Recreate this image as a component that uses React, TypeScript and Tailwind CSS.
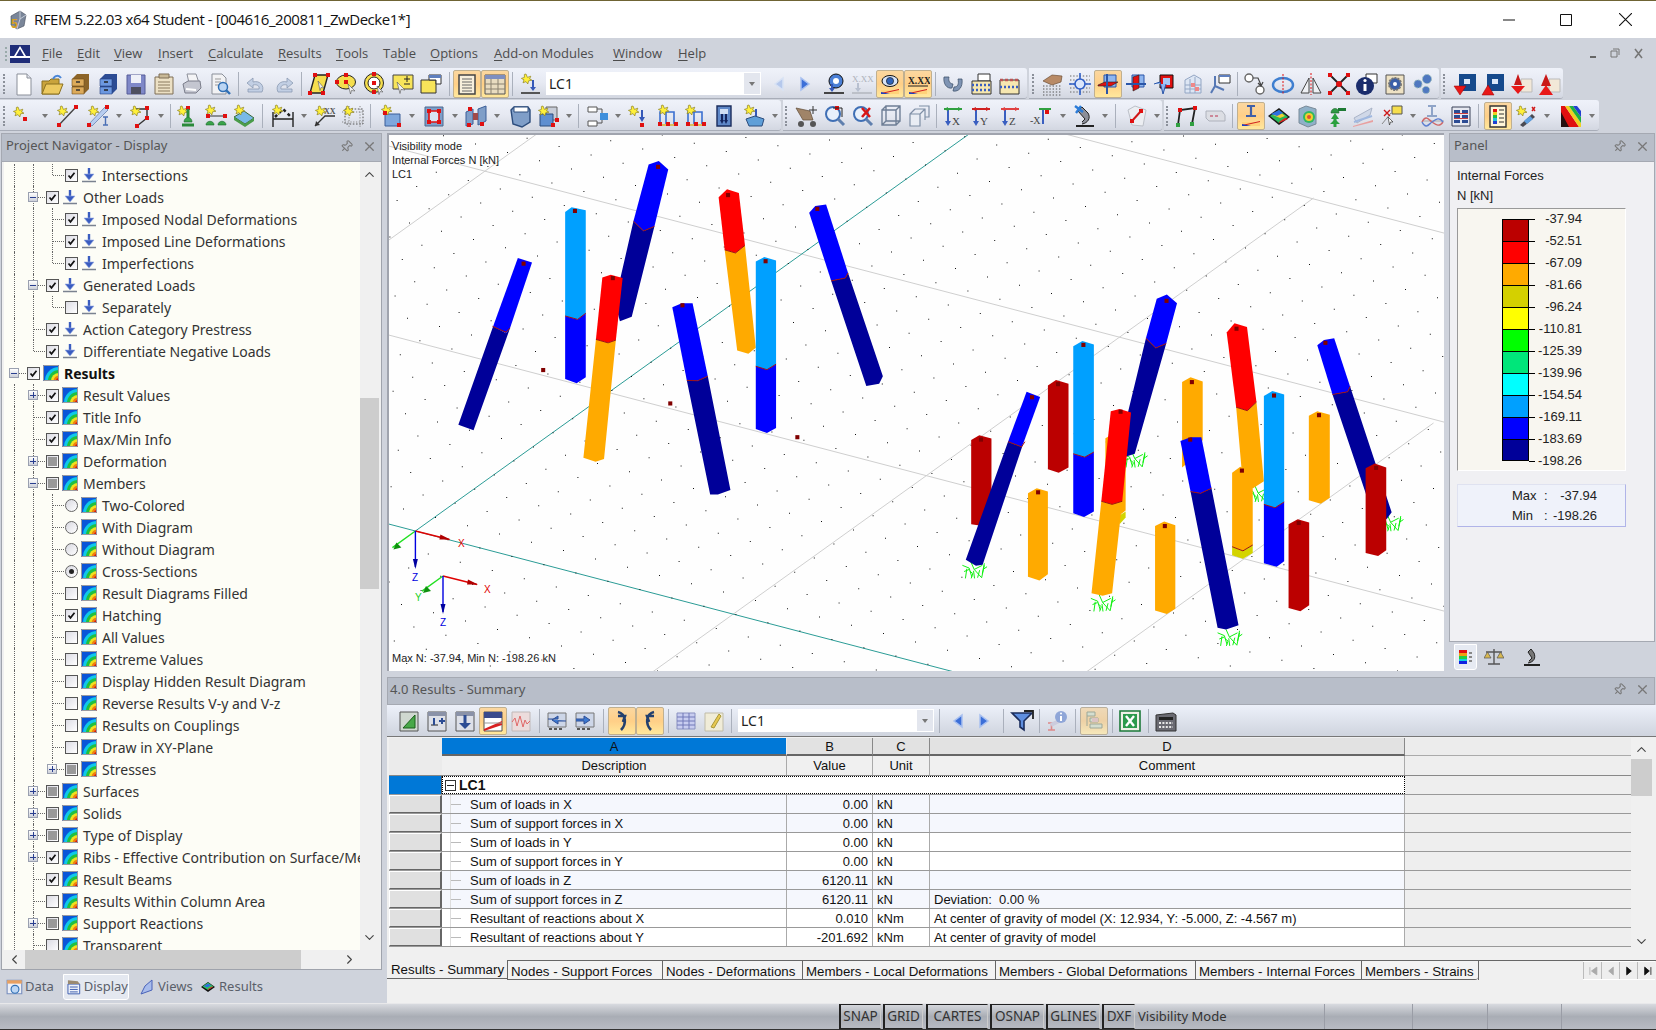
import type { ReactNode } from "react";
import { ChevronDown, ChevronLeft, ChevronRight, ChevronUp, Pin, X } from "lucide-react";

/* ---------- small drawing helpers for the toolbar icons ---------- */
const st = (x: number, y: number) => (
  <path
    d={`M${x} ${y - 5}l1.4 3.4 3.4-1.2-1.2 2.8 2.4 1.2-3.4.6-.8 3.2-1.8-2.4-3 1.2 1-3-2.6-1.4 3-1 0-3z`}
    fill="#fff03a"
    stroke="#8f8420"
    strokeWidth=".7"
  />
);
const n = (x: number, y: number, c = "#e01010") => <rect x={x - 2} y={y - 2} width="4" height="4" fill={c} />;
const grad = (
  <>
    <path d="M3 18h18v4H3z" fill="#ffd27a" />
    <path d="M3 22l18-4v-1L3 21z" fill="#d02020" />
    <path d="M3 22h9l-9-2z" fill="#1f3fc0" />
  </>
);
const mag = (
  <>
    <circle cx="10" cy="10" r="7" fill="#e8f0fb" stroke="#3f6fb5" strokeWidth="2" />
    <path d="M15 15l6 6" stroke="#5f7fae" strokeWidth="3" />
  </>
);
const frame = (
  <>
    <path d="M4 20V8h6v12M10 8h8v12" fill="none" stroke="#3a6fd0" strokeWidth="1.6" />
    <path d="M2 21h20" stroke="#d8c060" strokeWidth="2" />
    {n(4, 20)}
    {n(12, 20)}
    {n(20, 20)}
  </>
);
const axis = (l: string, c: string) => (
  <>
    <path d="M3 5h18" stroke={c} strokeWidth="2" />
    <path d="M7 6v13" stroke="#3a5fc0" strokeWidth="2" />
    <path d="M4 17l3 5 3-5z" fill="#3a5fc0" />
    <path d="M17 3l4 2-4 2zM7 3L3 5l4 2z" fill={c} />
    <text x="11" y="21" fontSize="11" fontFamily="Liberation Serif" fill="#444">
      {l}
    </text>
  </>
);

const icons: Record<string, ReactNode> = {
  new: (
    <>
      <path d="M5 2h10l4 4v17H5z" fill="#fff" stroke="#8a8f99" />
      <path d="M15 2v4h4" fill="#e4e6ee" stroke="#8a8f99" />
    </>
  ),
  open: (
    <>
      <path d="M2 9h7l2-2h8v15H2z" fill="#c9a33c" stroke="#8a7020" />
      <path d="M2 22l4-10h17l-4 10z" fill="#ecc95f" stroke="#8a7020" />
      <path d="M13 7c2-4 6-4 8-1" stroke="#4a86d8" fill="none" strokeWidth="2" />
    </>
  ),
  cabA: (
    <>
      <path d="M4 7l5-5h12v15l-5 5H4z" fill="#8c6428" />
      <path d="M4 7h12v7H4zM4 15h12v7H4z" fill="#dcaa5a" stroke="#6e4e1c" strokeWidth=".6" />
      <path d="M8 10h4M8 18h4" stroke="#333" strokeWidth="1.4" />
    </>
  ),
  cabB: (
    <>
      <path d="M4 7l5-5h12v15l-5 5H4z" fill="#2c4c94" />
      <path d="M4 7h12v7H4zM4 15h12v7H4z" fill="#6c98e0" stroke="#274080" strokeWidth=".6" />
      <path d="M8 10h4M8 18h4" stroke="#222" strokeWidth="1.4" />
    </>
  ),
  save: (
    <>
      <path d="M3 3h18v19H3z" fill="#7f88c8" stroke="#565c98" />
      <path d="M7 3h10v8H7z" fill="#eef0f8" />
      <path d="M7 15h10v7H7z" fill="#4d4f60" />
    </>
  ),
  note: (
    <>
      <path d="M3 5h18v17H3z" fill="#ece0c4" stroke="#7e6f56" />
      <path d="M7 2h10v4H7z" fill="#c8b896" stroke="#7e6f56" />
      <path d="M6 10h12M6 13h12M6 16h12M6 19h12" stroke="#8a7a5e" />
    </>
  ),
  print: (
    <>
      <path d="M7 2h9l3 9H9z" fill="#f4f4f6" stroke="#8c8f9a" />
      <path d="M3 12l5-3h12l1 7-5 5H5z" fill="#c4c6d0" stroke="#7a7d8a" />
      <path d="M6 17l10 1" stroke="#fff" strokeWidth="2" />
    </>
  ),
  prev: (
    <>
      <path d="M4 2h10l4 4v16H4z" fill="#f2f2f4" stroke="#8a8f99" />
      <path d="M7 7h6M7 10h6M7 13h4" stroke="#999" />
      <circle cx="15" cy="15" r="4.5" fill="#bcd6f4" stroke="#2f6fb5" strokeWidth="1.5" />
      <path d="M18 18l4 4" stroke="#2f6fb5" strokeWidth="2.4" />
    </>
  ),
  undo: <path d="M4 20h14c3-6-2-12-9-10V6L3 11l6 5v-3c4-1 7 1 6 4H4z" fill="#c2cfe4" stroke="#8c9ab2" strokeWidth=".8" />,
  redo: <path d="M20 20H6c-3-6 2-12 9-10V6l6 5-6 5v-3c-4-1-7 1-6 4h11z" fill="#c2cfe4" stroke="#8c9ab2" strokeWidth=".8" />,
  para: (
    <>
      <path d="M8 3h13l-5 18H3z" fill="#f5de4e" stroke="#222" strokeWidth="1.4" />
      {n(8, 3)}
      {n(21, 3)}
      {n(3, 21)}
      {n(16, 21)}
      <path d="M11 9l6 7-3-.5-1 3z" fill="#eee" stroke="#555" strokeWidth=".6" />
    </>
  ),
  ellipse: (
    <>
      <ellipse cx="11" cy="10" rx="9.5" ry="7" fill="#f5de4e" stroke="#222" />
      {n(11, 3)}
      {n(11, 10)}
      {n(2, 10)}
      <path d="M13 12l7 7-3.5-.5-1 3.5z" fill="#eee" stroke="#555" strokeWidth=".6" />
    </>
  ),
  ring: (
    <>
      <circle cx="11" cy="11" r="9.5" fill="#f5de4e" stroke="#222" />
      <circle cx="11" cy="11" r="6" fill="#fff" stroke="#222" />
      {n(11, 11)}
      {n(11, 2)}
      {n(11, 20)}
      <path d="M14 14l6 6-3-.4-1 3z" fill="#eee" stroke="#555" strokeWidth=".6" />
    </>
  ),
  plus: (
    <>
      <path d="M2 3h20v14H2z" fill="#f7e45a" stroke="#444" />
      <path d="M13 7h6M16 4v6M13 12h6" stroke="#222" />
      <path d="M6 10l8 8-4-.5-1 4z" fill="#eee" stroke="#555" strokeWidth=".6" />
    </>
  ),
  win: (
    <>
      <path d="M2 8h15v13H2z" fill="#f7e45a" stroke="#333" />
      <path d="M10 3h12v9h-5V8h-7z" fill="#fff" stroke="#333" />
      <path d="M10 3h12v3H10z" fill="#5f7fbe" />
    </>
  ),
  list: (
    <>
      <path d="M4 3h16v19H4z" fill="#f7efdc" stroke="#444" strokeWidth="1.5" />
      <path d="M7 7h10M7 10h10M7 13h10M7 16h10M7 19h10" stroke="#666" />
    </>
  ),
  grid: (
    <>
      <path d="M2 3h20v19H2z" fill="#e9dcc0" stroke="#555" />
      <path d="M2 3h20v4H2z" fill="#7f8fc0" />
      <path d="M2 12h20M2 17h20M8 7v15M15 7v15" stroke="#8b8270" />
    </>
  ),
  lc: (
    <>
      {st(8, 7)}
      <path d="M15 8v9" stroke="#3558b8" strokeWidth="2" />
      <path d="M12 15h6l-3 4z" fill="#3558b8" />
      <path d="M3 21h19" stroke="#555" strokeWidth="2" />
    </>
  ),
  eyeLoad: (
    <>
      <circle cx="14" cy="9" r="7" fill="#4a7fd6" stroke="#111" />
      <circle cx="14" cy="9" r="3" fill="#fff" />
      <path d="M10 12v6" stroke="#3558b8" strokeWidth="2" />
      <path d="M7 16h6l-3 4z" fill="#3558b8" />
      <path d="M2 21h20" stroke="#444" strokeWidth="2" />
    </>
  ),
  xxOff: (
    <>
      <text x="2" y="10" fontSize="9" fontFamily="Liberation Serif" fill="#aeb2ba">
        X.XX
      </text>
      <path d="M8 11v7" stroke="#b8c0d0" strokeWidth="2" />
      <path d="M5 16h6l-3 4z" fill="#b8c0d0" />
      <path d="M2 21h20" stroke="#bcc0c8" strokeWidth="2" />
    </>
  ),
  eye: (
    <>
      <ellipse cx="12" cy="9" rx="8" ry="5.5" fill="#d8e4f8" stroke="#111" />
      <circle cx="12" cy="9" r="3.6" fill="#2f62b8" stroke="#111" strokeWidth=".6" />
      {grad}
    </>
  ),
  xx: (
    <>
      <text x="2" y="12" fontSize="9.5" fontWeight="700" fontFamily="Liberation Serif" fill="#222">
        X.XX
      </text>
      <path d="M2 14h20" stroke="#222" />
      {grad}
    </>
  ),
  link: <path d="M3 5c-1 7 3 12 8 11l1-4c-3 0-5-3-4-7zM21 7c1 8-3 13-9 12l1-4c4 0 5-3 4-8z" fill="#7f94b4" stroke="#43556f" strokeWidth=".8" />,
  abacA: (
    <>
      <path d="M9 2h12v7H9z" fill="#fff" stroke="#333" />
      <path d="M3 9h19v13H3z" fill="#f6e7b0" stroke="#333" />
      <path d="M3 13h19M3 18h19" stroke="#3a5fc0" strokeWidth="2.4" strokeDasharray="2 2" />
    </>
  ),
  abacB: (
    <>
      <path d="M3 8h19v14H3z" fill="#f6e7b0" stroke="#333" />
      <path d="M3 8h19" stroke="#b55" strokeWidth="2.4" strokeDasharray="3 2" />
      <path d="M3 15h19" stroke="#3a5fc0" strokeWidth="2.4" strokeDasharray="2 2" />
    </>
  ),
  hand: (
    <>
      <path d="M3 9l9-6 10 1-1 6-9 3z" fill="#b88a66" stroke="#6e5038" strokeWidth=".7" />
      <path d="M3 14h19M3 17h19M3 20h19M3 23h19" stroke="#555" strokeDasharray="1.4 1.8" />
    </>
  ),
  target: (
    <>
      <path d="M2 4h20M2 8h20M2 12h20M2 16h20M2 20h20" stroke="#666" strokeDasharray="1.4 1.8" />
      <path d="M12 1v22M1 12h22" stroke="#2f5fc8" strokeWidth="1.6" />
      <circle cx="12" cy="12" r="5" fill="#dbe6fb" stroke="#2f5fc8" strokeWidth="1.6" />
    </>
  ),
  cubeA: (
    <>
      <path d="M8 3h12v12H8z" fill="#8fb6ef" stroke="#2a55a8" />
      <path d="M2 13l7-3h13l-7 4H2z" fill="#e01010" stroke="#222" strokeWidth=".6" />
      <path d="M11 2v20" stroke="#2a55a8" strokeWidth="2" />
    </>
  ),
  cubeB: (
    <>
      <path d="M8 3h12v12H8z" fill="#8fb6ef" stroke="#2a55a8" />
      <path d="M9 5v14l6-3V3z" fill="#e01010" stroke="#222" strokeWidth=".6" />
      <path d="M2 12h20" stroke="#2a55a8" strokeWidth="2" />
    </>
  ),
  cubeC: (
    <>
      <path d="M8 3h13v13H8z" fill="#e01010" stroke="#111" />
      <path d="M11 6h7v7h-7z" fill="#a8c8f4" />
      <path d="M2 12l6-2 3 12 3-10" fill="#8fb6ef" stroke="#2a55a8" />
    </>
  ),
  bldg: (
    <>
      <path d="M5 8l9-5 7 4v14H5z" fill="#dde6f4" stroke="#93a6c4" />
      <path d="M5 13h16M5 17h16M10 7v14M15 5v16" stroke="#93a6c4" />
      {n(13, 13, "#e88")}
      {n(17, 17, "#e88")}
    </>
  ),
  branch: (
    <>
      <path d="M11 3h11v8H11z" fill="#fff" stroke="#333" />
      <path d="M11 3h11v2H11z" fill="#5f7fbe" />
      <path d="M7 4v10M7 14l-4 7M7 14l9 4" stroke="#5678b5" strokeWidth="2" fill="none" />
    </>
  ),
  chain: (
    <>
      <circle cx="6" cy="6" r="4" fill="#fff" stroke="#666" strokeWidth="1.4" />
      <circle cx="17" cy="18" r="4" fill="#fff" stroke="#666" strokeWidth="1.4" />
      <path d="M10 6h5l3 7M15 11l3 3 2-4" fill="none" stroke="#444" strokeWidth="1.2" />
    </>
  ),
  orbit: (
    <>
      <ellipse cx="12" cy="13" rx="10" ry="7" fill="none" stroke="#3f7fd0" strokeWidth="2.4" />
      <path d="M12 2v21" stroke="#e01010" strokeDasharray="2 1.5" />
    </>
  ),
  mirror: (
    <>
      <path d="M10 6L2 21h8zM14 6l8 15h-8z" fill="#eef0f4" stroke="#444" />
      <path d="M12 1v22" stroke="#e01010" strokeDasharray="2 1.5" />
    </>
  ),
  cross: (
    <>
      <path d="M3 3l18 18M21 3L3 21" stroke="#222" strokeWidth="1.8" />
      <circle cx="12" cy="12" r="3" fill="#e01010" />
      {n(3, 3)}
      {n(21, 3)}
      {n(3, 21)}
      {n(21, 21)}
    </>
  ),
  info: (
    <>
      <path d="M11 2h11v9H11z" fill="#fff" stroke="#333" />
      <circle cx="10" cy="14" r="9" fill="#1a2c6c" />
      <path d="M10 12v7" stroke="#fff" strokeWidth="3" />
      <circle cx="10" cy="8.5" r="1.6" fill="#fff" />
    </>
  ),
  gearBox: (
    <>
      <path d="M3 3h18v19H3z" fill="#eee2c4" stroke="#555" />
      <circle cx="12" cy="12" r="6" fill="#3a5fa8" stroke="#777" strokeWidth="2" strokeDasharray="2 1" />
      <circle cx="12" cy="12" r="2" fill="#fff" />
    </>
  ),
  gears: (
    <>
      <circle cx="16" cy="7" r="4.5" fill="#4f78c0" stroke="#9bb" strokeDasharray="2 1" />
      <circle cx="7" cy="12" r="4" fill="#4f78c0" stroke="#9bb" strokeDasharray="2 1" />
      <circle cx="15" cy="18" r="3.6" fill="#4f78c0" stroke="#9bb" strokeDasharray="2 1" />
    </>
  ),
  blueDn: (
    <>
      <path d="M6 2h17v17H6z" fill="#164a8c" />
      <path d="M11 7h6v5h-6z" fill="#dce8f8" />
      <path d="M1 14h12l-6 9z" fill="#e81818" stroke="#900" strokeWidth=".5" />
    </>
  ),
  blueUp: (
    <>
      <path d="M6 2h17v17H6z" fill="#164a8c" />
      <path d="M11 7h6v5h-6z" fill="#dce8f8" />
      <path d="M1 23h12L7 13z" fill="#e81818" stroke="#900" strokeWidth=".5" />
    </>
  ),
  redDn: (
    <>
      <path d="M12 7h11v13H12z" fill="#f2e8d8" stroke="#bbb" />
      <path d="M9 2l4 11H5z" fill="#c81818" />
      <path d="M2 14h14l-7 8z" fill="#e81818" />
    </>
  ),
  redUp: (
    <>
      <path d="M12 7h11v13H12z" fill="#f2e8d8" stroke="#bbb" />
      <path d="M9 2l5 12H4z" fill="#c81818" />
      <path d="M2 23h14L9 13z" fill="#e81818" />
    </>
  ),
  sNode: (
    <>
      {st(8, 8)}
      {n(15, 15)}
    </>
  ),
  sLine: (
    <>
      {st(7, 7)}
      <path d="M3 22L21 3" stroke="#444" strokeWidth="1.4" />
      {n(4, 21)}
      {n(21, 3)}
    </>
  ),
  sRib: (
    <>
      <path d="M3 20L19 3l3 3L6 22z" fill="#b8cdf0" stroke="#7f95bb" />
      {st(7, 7)}
      {n(3, 21)}
      {n(21, 3)}
      <path d="M17 13h5M19.500 13v8M17 21h5" stroke="#4a6fb5" strokeWidth="1.4" />
    </>
  ),
  sPoly: (
    <>
      <path d="M6 5h13v9l-10 8" fill="none" stroke="#333" strokeWidth="1.4" />
      {st(7, 7)}
      {n(19, 4)}
      {n(19, 14)}
      {n(9, 22)}
    </>
  ),
  sSup: (
    <>
      {st(7, 7)}
      {n(13, 4)}
      <path d="M9 18c0-6 8-6 8 0z" fill="#3aa34a" stroke="#1a6a2a" strokeWidth=".6" />
      <path d="M13 5v9M7 21h12" stroke="#2a8a3a" strokeWidth="3" />
    </>
  ),
  sSup2: (
    <>
      {st(6, 6)}
      <path d="M4 12h18" stroke="#333" />
      {n(4, 12)}
      {n(21, 12)}
      <path d="M2 21c0-5 8-5 8 0zM14 21c0-5 8-5 8 0z" fill="#3aa34a" stroke="#1a6a2a" strokeWidth=".6" />
    </>
  ),
  sTile: (
    <>
      <path d="M2 13l10-6 10 7-9 6z" fill="#79b9e8" stroke="#386a38" />
      <path d="M2 13v3l11 7 9-6v-3l-9 6z" fill="#4a9c4a" />
      {st(7, 6)}
    </>
  ),
  sDim: (
    <>
      <path d="M2 8v15M22 8v15M2 15h20" stroke="#222" strokeWidth="1.4" />
      <path d="M4 13l8-8 8 8" fill="none" stroke="#222" strokeWidth="2.5" strokeDasharray="3 3" />
      {st(6, 6)}
    </>
  ),
  sXx: (
    <>
      <text x="11" y="10" fontSize="8" fontWeight="700" fontFamily="Liberation Serif" fill="#555">
        XX
      </text>
      <path d="M2 22L12 12h10" fill="none" stroke="#333" strokeWidth="1.3" />
      <path d="M2 22l1-5 4 4z" fill="#333" />
      {st(7, 7)}
    </>
  ),
  sDash: (
    <>
      <path d="M4 5h18v15H4z" fill="none" stroke="#555" strokeDasharray="1.6 1.6" />
      <path d="M8 2v21M19 2v21M1 8h22M1 18h22" stroke="#888" strokeDasharray="1.2 1.6" />
      {st(7, 7)}
    </>
  ),
  sSurf: (
    <>
      <path d="M6 10h15v12H6z" fill="#7fa7dc" stroke="#3c5f98" />
      {st(7, 6)}
      {n(6, 9)}
      {n(20, 21)}
    </>
  ),
  sOpen: (
    <>
      <path d="M3 3h18v19H3z" fill="#7f9ec8" stroke="#4b6890" />
      <path d="M7 7h10v11H7z" fill="#d8e4f4" stroke="#e01010" strokeWidth="1.6" />
      {n(7, 7)}
      {n(17, 7)}
      {n(7, 18)}
      {n(17, 18)}
    </>
  ),
  sPlate: (
    <>
      <path d="M2 8l7-3v15l-7 2zM14 5l8-3v15l-8 4z" fill="#7f9ec8" stroke="#3c5f98" />
      <path d="M9 9h5v7H9z" fill="#a04a4a" />
      {n(5, 21)}
      {n(18, 20)}
      {n(6, 5)}
    </>
  ),
  sBox: (
    <>
      <path d="M3 6l3-3h14l2 3v12l-8 5-9-3z" fill="#7f9ec8" stroke="#2c4c7c" strokeWidth="1.4" />
      <path d="M6 3h14v5H6z" fill="#fff" stroke="#2c4c7c" />
    </>
  ),
  sStack: (
    <>
      <path d="M10 3h11v13H10z" fill="#c8cdd8" stroke="#666" />
      <path d="M4 10h13v12H4z" fill="#5f8fd0" stroke="#2c4c7c" />
      {st(7, 7)}
      {n(17, 21)}
      {n(21, 16)}
    </>
  ),
  sFlow: (
    <>
      <path d="M2 3h9v5H2zM2 17h9v5H2z" fill="#fff" stroke="#555" />
      <path d="M11 5h5v14h-5" fill="none" stroke="#555" />
      <path d="M14 9h8v7h-8z" fill="#3f8fdc" />
    </>
  ),
  sArrow: (
    <>
      {st(7, 7)}
      <path d="M16 6v10" stroke="#3558b8" strokeWidth="2" />
      <path d="M13 13h6l-3 5z" fill="#3558b8" />
      {n(16, 21)}
    </>
  ),
  sFrameA: (
    <>
      {frame}
      {st(7, 6)}
    </>
  ),
  sFrameB: (
    <>
      {frame}
      {st(6, 6)}
    </>
  ),
  sBlue: (
    <>
      <path d="M5 2h14v20H5z" fill="#5f88c8" stroke="#1a2c5c" strokeWidth="1.4" />
      <path d="M8 5h8v5H8z" fill="#d0dff5" />
      <path d="M10 10v8M14 10v8" stroke="#13245c" strokeWidth="2" />
      <path d="M8 16h4l-2 4zM12 16h4l-2 4z" fill="#13245c" />
    </>
  ),
  sDrop: (
    <>
      {st(7, 6)}
      <path d="M14 5v9" stroke="#3558b8" strokeWidth="2" />
      <path d="M4 15l9-3 9 3-2 7H7z" fill="#5f9fd8" stroke="#2c4c7c" />
    </>
  ),
  eagle: (
    <>
      <path d="M1 4l14 3 3 9H8z" fill="#a08468" stroke="#5e4a36" strokeWidth=".7" />
      <circle cx="6" cy="20" r="3" fill="#555" />
      <circle cx="18" cy="20" r="3" fill="#555" />
      <path d="M18 2v8M14 6h8" stroke="#333" />
    </>
  ),
  magPlus: (
    <>
      {mag}
      {n(14, 4)}
      <path d="M10 4h9v9" fill="none" stroke="#222" />
    </>
  ),
  magX: (
    <>
      {mag}
      <path d="M11 4l8 9M19 4l-8 9" stroke="#d81818" strokeWidth="2.6" />
    </>
  ),
  wire: (
    <>
      <path d="M3 6h14v15H3zM7 2h14v15H7zM3 6l4-4M17 6l4-4M3 21l4-4M17 21l4-4" fill="none" stroke="#6f7f96" strokeWidth="1.4" />
    </>
  ),
  wire2: (
    <>
      <path d="M3 10h10v12H3zM8 5h10v11M13 10l5-5M8 5l-5 5" fill="#e9edf4" stroke="#7f8fa6" strokeWidth="1.2" />
      <path d="M12 2h10v11h-4" fill="none" stroke="#7f8fa6" strokeWidth="1.2" />
    </>
  ),
  vX: axis("X", "#30a040"),
  vY: axis("Y", "#d02020"),
  vZ: axis("Z", "#e04040"),
  vMx: (
    <>
      <path d="M10 5h12" stroke="#30a040" strokeWidth="2" />
      <path d="M14 6v14" stroke="#3a5fc0" strokeWidth="2" />
      {n(18, 8)}
      <text x="1" y="20" fontSize="10" fontFamily="Liberation Serif" fill="#444">
        -X
      </text>
    </>
  ),
  micro: (
    <>
      <path d="M4 21h18v2H4z" fill="#222" />
      <path d="M10 20c6-1 9-6 6-11l-6-6-4 4 7 8-3 3" fill="#8c8f99" stroke="#222" />
      <path d="M3 2l8 6M9 2L4 9" stroke="#2c7cd8" strokeWidth="2.4" />
    </>
  ),
  cubeRed: (
    <>
      <path d="M3 6l7-4 11 4-3 16-11-1z" fill="#eceef2" stroke="#bcc0c8" />
      <path d="M7 17l9-10" stroke="#d01818" strokeWidth="2" />
      {n(7, 17)}
      {n(16, 7)}
    </>
  ),
  portal: (
    <>
      <path d="M4 21l2-15 15-2-3 16" fill="none" stroke="#222" strokeWidth="1.8" />
      {n(4, 21, "#30a040")}
      {n(18, 20, "#30a040")}
      {n(6, 6)}
      {n(21, 4)}
    </>
  ),
  pill: (
    <>
      <path d="M3 7h16l3 4v6H6l-3-3z" fill="#dcdee4" stroke="#aeb2bc" />
      <path d="M7 12h10" stroke="#c89" strokeWidth="2" strokeDasharray="3 2" />
    </>
  ),
  beam: (
    <>
      <path d="M8 2h8M12 2v10M7 12h10" stroke="#4060a8" strokeWidth="2.2" />
      {grad}
    </>
  ),
  tile: (
    <>
      <path d="M1 12L12 4l11 9-11 8z" fill="#1a1a1a" />
      <path d="M3 12l9-6 9 7-9 6z" fill="#28b858" />
      <path d="M6 11l6-4 6 5-5 2z" fill="#f0d030" />
      <path d="M4 10l8-4 4 3-6 3z" fill="#2c6fe0" />
      <path d="M12 18l6-4 3 1-9 4z" fill="#e02020" />
    </>
  ),
  cubeMap: (
    <>
      <path d="M4 5l7-3 10 3v15l-8 3-9-4z" fill="#8fb0c8" stroke="#7a8a98" />
      <circle cx="14" cy="13" r="6" fill="#30b860" />
      <circle cx="14" cy="13" r="4" fill="#f0d030" />
      <circle cx="14" cy="13" r="2" fill="#e05030" />
    </>
  ),
  green: (
    <>
      <path d="M8 9c0-6 8-6 8 0z" fill="#2f9a44" stroke="#1c602c" strokeWidth=".6" />
      <path d="M12 23v-9" stroke="#2aa03e" strokeWidth="3" />
      <path d="M8 15h8l-4-6zM7 20h10l-5-5z" fill="#2aa03e" />
      <path d="M15 4h8v3h-8z" fill="#1d7a34" />
    </>
  ),
  blur: (
    <>
      <path d="M3 14L21 4l-2 7-13 8z" fill="#d0d8e8" stroke="#aab4c8" />
      <path d="M2 22l20-6v2L2 23z" fill="#e8a0a0" />
      <path d="M3 18l18-6" stroke="#a0b8e0" strokeWidth="2" />
    </>
  ),
  note2: (
    <>
      <path d="M2 20l9-11" stroke="#888" />
      <path d="M12 2h10v8H12z" fill="#f5de4e" stroke="#555" />
      <path d="M4 6l6 6M10 6l-6 6" stroke="#d01818" strokeWidth="1.4" />
      <path d="M8 13l5 5-2.500 0-1 3z" fill="#fff" stroke="#333" strokeWidth=".7" />
    </>
  ),
  wave: (
    <>
      <path d="M7 2h8M11 2v10M6 12h10" stroke="#8fa4c8" strokeWidth="2" />
      <path d="M1 17h22" stroke="#aaa" />
      <path d="M1 18c4-8 7-2 10 0s7 6 11 0" fill="none" stroke="#d06868" strokeWidth="1.4" />
      <path d="M1 18c4 8 7 2 10 0s7-6 11 0" fill="none" stroke="#5f80d0" strokeWidth="1.4" />
    </>
  ),
  tblA: (
    <>
      <path d="M3 3h18v19H3z" fill="#e6e8f0" stroke="#3a4258" />
      <path d="M5 6h6v3H5zM13 6h6v3h-6zM5 11h6v3H5zM13 11h6v3h-6zM5 16h6v3H5zM13 16h6v3h-6z" fill="#2c4c94" />
      <path d="M5 9.500h14M5 14.500h14" stroke="#c84040" />
    </>
  ),
  legend: (
    <>
      <path d="M4 2h16v21H4z" fill="#fff6d8" stroke="#333" strokeWidth="1.4" />
      <path d="M7 5h4v3H7z" fill="#e01010" />
      <path d="M7 8h4v3H7z" fill="#f0d020" />
      <path d="M7 11h4v3H7z" fill="#20c040" />
      <path d="M7 14h4v3H7z" fill="#20c0e0" />
      <path d="M7 17h4v3H7z" fill="#2040d0" />
      <path d="M13 6h5M13 10h5M13 14h5M13 18h5" stroke="#333" />
    </>
  ),
  wand: (
    <>
      {st(7, 7)}
      <path d="M6 21l12-11 3 3-12 10z" fill="#4a4a52" />
      <path d="M10 17l6-5 3 3-6 5z" fill="#5f9fe0" />
      <path d="M18 3l3 4M21 3l-3 4" stroke="#d01818" strokeWidth="1.4" />
    </>
  ),
  rainbowV: (
    <>
      <path d="M2 2h4l14 21H2z" fill="#e01010" />
      <path d="M6 2h4l12 17v4h-2z" fill="#f0d020" />
      <path d="M10 2h4l8 11v6z" fill="#20b040" />
      <path d="M14 2h4l4 5v6z" fill="#2040d0" />
      <path d="M2 8v15h8" fill="#111" opacity=".9" />
    </>
  ),
  rGreen: (
    <>
      <path d="M3 3h18v19H3z" fill="#cfd8d0" stroke="#555" />
      <path d="M6 19L18 6v13z" fill="#48a848" stroke="#1a601a" />
    </>
  ),
  rAdd: (
    <>
      <path d="M3 3h18v19H3z" fill="#dde0e8" stroke="#555" />
      <path d="M3 3h18v4H3z" fill="#8a92a8" />
      <path d="M6 16h7" stroke="#222" />
      <path d="M9 9v7M14 12h6M17 9v6" stroke="#2c4c94" strokeWidth="2" />
    </>
  ),
  rDown: (
    <>
      <path d="M3 3h18v19H3z" fill="#dde0e8" stroke="#555" />
      <path d="M3 3h18v4H3z" fill="#8a92a8" />
      <path d="M12 6v10" stroke="#2c4c94" strokeWidth="3" />
      <path d="M6 14h12l-6 6z" fill="#2c4c94" />
    </>
  ),
  rTbl: (
    <>
      <path d="M3 3h18v19H3z" fill="#fff" stroke="#555" />
      <path d="M3 3h18v6H3z" fill="#3a4a8c" />
      <path d="M3 20l18-8v4L3 22z" fill="#d82020" />
      <path d="M3 14h18" stroke="#999" />
    </>
  ),
  rWave: (
    <>
      <path d="M3 3h18v19H3z" fill="#ecdcdc" stroke="#c0b8b8" />
      <path d="M3 13l3-4 2 8 3-10 3 11 2-7 2 4 3-3" fill="none" stroke="#e06868" />
    </>
  ),
  rLeft: (
    <>
      <path d="M3 4h18v14H3z" fill="#cdd6e8" stroke="#777" />
      <path d="M3 10h10V7l-6 4 6 4v-3h8" fill="#3c78d0" stroke="#2c4c94" />
      <path d="M4 20h3M9 20h3M14 20h3" stroke="#555" strokeWidth="2" />
    </>
  ),
  rRight: (
    <>
      <path d="M3 4h18v14H3z" fill="#cdd6e8" stroke="#777" />
      <path d="M3 10h8V7l6 4-6 4v-3H3" fill="#3c78d0" stroke="#2c4c94" />
      <path d="M4 20h3M9 20h3M14 20h3" stroke="#555" strokeWidth="2" />
    </>
  ),
  rCurveA: <path d="M8 3c8 2 9 12 3 18M8 7h7l-2 6" fill="none" stroke="#24406e" strokeWidth="2.6" />,
  rCurveB: <path d="M16 3c-8 2-9 12-3 18M16 7H9l2 6" fill="none" stroke="#24406e" strokeWidth="2.6" />,
  rGrid: (
    <>
      <path d="M3 4h18v16H3z" fill="#c8cdf0" stroke="#8890c0" />
      <path d="M3 8h18M3 12h18M3 16h18M9 4v16M15 4v16" stroke="#7078b8" />
    </>
  ),
  rPen: (
    <>
      <path d="M3 4h18v18H3z" fill="#f0ecd8" stroke="#c0bca8" />
      <path d="M9 18l8-13 2 2-7 12z" fill="#e8c850" stroke="#a89838" />
    </>
  ),
  funnel: (
    <>
      <path d="M2 4h20l-8 8v9l-4-3v-6z" fill="#5f8fe0" stroke="#1a2c5c" strokeWidth="1.6" />
      <path d="M14 2h9v8" fill="none" stroke="#222" strokeWidth="1.8" />
    </>
  ),
  iBeamInfo: (
    <>
      <path d="M3 14h7M6.500 14v7M3 21h7" stroke="#d88" strokeWidth="1.6" />
      <path d="M6 16l12-6" stroke="#ccd" strokeWidth="4" />
      <circle cx="16" cy="8" r="6" fill="#8fa6d8" />
      <path d="M16 7v5" stroke="#fff" strokeWidth="2" />
      <circle cx="16" cy="4.500" r="1" fill="#fff" />
    </>
  ),
  tree: (
    <>
      <path d="M5 3h8v4H5zM8 9h8v4H8zM8 15h12v4H8z" fill="#cfe0c8" stroke="#99aa90" />
      <path d="M5 7v10" stroke="#99aa90" />
      <path d="M10 9h6v4h-6z" fill="#e8c0c0" />
    </>
  ),
  excel: (
    <>
      <path d="M2 2h20v20H2z" fill="#f0f0e8" stroke="#1d7a3a" strokeWidth="1.6" />
      <path d="M5 5h14v14H5z" fill="#2c9a4c" />
      <path d="M8 7l8 10M16 7L8 17" stroke="#fff" strokeWidth="2.4" />
    </>
  ),
  calc: (
    <>
      <path d="M2 6l17-2 3 2v16H2z" fill="#6a6a72" stroke="#333" />
      <path d="M5 8h14v3H5z" fill="#222" />
      <path d="M5 14h14M5 18h14" stroke="#e8e8e8" strokeWidth="2" strokeDasharray="2 1.4" />
    </>
  ),
};

function Ico({ k, size = 24 }: { k: string; size?: number }) {
  return (
    <svg viewBox="0 0 24 24" width={size} height={size} className="shrink-0">
      {icons[k]}
    </svg>
  );
}

function Btn({ k, active, className = "" }: { k: string; active?: boolean; className?: string }) {
  return (
    <div
      className={`w-[28px] h-[28px] shrink-0 flex items-center justify-center rounded-[2px] border ${
        active ? "bg-gradient-to-b from-[#fbd7a0] via-[#ffcf87] to-[#ffe89c] border-[#c0b090]" : "border-transparent"
      } ${className}`}
    >
      <Ico k={k} />
    </div>
  );
}

const Dd = ({ className = "w-[14px]" }: { className?: string }) => (
  <div className={`h-[28px] shrink-0 flex items-center justify-center ${className}`}>
    <div className="w-0 h-0 border-x-[3.5px] border-x-transparent border-t-[4px] border-t-[#777]" />
  </div>
);
const Sep = ({ className = "w-[8px]" }: { className?: string }) => (
  <div className={`h-[24px] shrink-0 flex justify-center ${className}`}>
    <div className="w-px h-full bg-[#aab0bc]" />
  </div>
);
const Grip = ({ className = "" }: { className?: string }) => (
  <div className={`w-[5px] h-[20px] shrink-0 border-l-2 border-dotted border-[#8b909a] ${className}`} />
);

function Seg({ className, children }: { className: string; children: ReactNode }) {
  return (
    <div
      className={`h-[31px] flex items-center shrink-0 rounded-r-[3px] border-b border-[#a8adb8] bg-gradient-to-b from-[#eff2fa] via-[#e6e9f2] to-[#d3d7e1] ${className}`}
    >
      {children}
    </div>
  );
}

function Combo({ className }: { className: string }) {
  return (
    <div className={`h-[23px] shrink-0 bg-white flex items-center text-[14px] text-[#222] ${className}`}>
      <span className="flex-1 pl-[3px] font-['Noto_Sans']">LC1</span>
      <div className="w-[18px] h-full bg-[#e3e6ee] border border-white flex items-center justify-center">
        <div className="w-0 h-0 border-x-[3.5px] border-x-transparent border-t-[4px] border-t-[#777]" />
      </div>
    </div>
  );
}

const Tri = ({ dir, pale, className = "" }: { dir: "l" | "r"; pale?: boolean; className?: string }) => (
  <div className={`w-[26px] h-[28px] shrink-0 flex items-center justify-center ${className}`}>
    <svg viewBox="0 0 12 16" width="12" height="16">
      <path
        d={dir === "l" ? "M10 2v12L2 8z" : "M2 2v12l8-6z"}
        fill={pale ? "#b5c8ec" : "#3c6fd8"}
        stroke={pale ? "#d8e2f4" : "#a8c0f0"}
        strokeWidth="1.5"
      />
    </svg>
  </div>
);

/* ---------- menu ---------- */
const menu: [string, string, string, string][] = [
  ["", "F", "ile", "w-[35px]"],
  ["", "E", "dit", "w-[37px]"],
  ["", "V", "iew", "w-[44px]"],
  ["", "I", "nsert", "w-[50px]"],
  ["", "C", "alculate", "w-[70px]"],
  ["", "R", "esults", "w-[58px]"],
  ["", "T", "ools", "w-[47px]"],
  ["Ta", "b", "le", "w-[47px]"],
  ["", "O", "ptions", "w-[64px]"],
  ["", "A", "dd-on Modules", "w-[119px]"],
  ["", "W", "indow", "w-[65px]"],
  ["", "H", "elp", "w-[40px]"],
];

function TitleBar() {
  return (
    <div className="h-[38px] bg-white border-t border-[#6f6434] flex items-center shrink-0">
      <svg viewBox="0 0 20 20" width="20" height="20" className="ml-[8px]">
        <path d="M3 6l9-5 6 4-2 11-7 3-6-4z" fill="#7a8699" stroke="#444c5a" strokeWidth=".6" />
        <path d="M12 1v8l6-4M12 9l-3 10" stroke="#c5ccd8" fill="none" />
        <text x="3" y="18" fontSize="12" fontWeight="700" fontFamily="Liberation Sans" fill="#d8a020">
          5
        </text>
      </svg>
      <span className="ml-[6px] text-[15px] text-[#111] font-['Open_Sans'] tracking-[-0.45px]">
        RFEM 5.22.03 x64 Student - [004616_200811_ZwDecke1*]
      </span>
      <div className="flex-1" />
      <svg viewBox="0 0 12 12" width="12" height="12" className="mr-[45px]">
        <path d="M0 6h12" stroke="#111" />
      </svg>
      <svg viewBox="0 0 12 12" width="12" height="12" className="mr-[47px]">
        <path d="M.5 .5h11v11H.5z" fill="none" stroke="#111" />
      </svg>
      <svg viewBox="0 0 12 12" width="13" height="13" className="mr-[24px]">
        <path d="M0 0l12 12M12 0L0 12" stroke="#111" />
      </svg>
    </div>
  );
}

function MenuBar() {
  return (
    <div className="h-[30px] pt-px bg-[#cfd3dc] flex items-center shrink-0 text-[13px] text-[#4c4c4c] font-['Open_Sans']">
      <div className="ml-[5px] w-[3px] h-[14px] border-l-2 border-dotted border-[#9aa]" />
      <svg viewBox="0 0 20 18" width="20" height="18" className="ml-[2px] mr-[12px]">
        <path d="M0 0h20v18H0z" fill="#1f2d78" />
        <path d="M0 11h20v2H0zM10 1L4 11h2l4-7 4 7h2z" fill="#fff" />
      </svg>
      {menu.map(([a, b, c, w]) => (
        <span key={b + c} className={`shrink-0 ${w}`}>
          {a}
          <u className="underline-offset-2">{b}</u>
          {c}
        </span>
      ))}
      <div className="flex-1" />
      <svg viewBox="0 0 60 12" width="60" height="12" className="mr-[6px]">
        <path d="M0 9h6" stroke="#666" strokeWidth="2" />
        <path d="M21 3h6v6h-6zM23 1h6v6" fill="none" stroke="#777" />
        <path d="M45 1l7 9M52 1l-7 9" stroke="#777" strokeWidth="1.6" />
      </svg>
    </div>
  );
}

function ToolRowOne() {
  return (
    <div className="h-[32px] flex shrink-0 bg-[#cfd3dc]">
      <Seg className="w-[1027px] pl-[3px] pt-px">
        <Grip className="mr-[2px]" />
        <Btn k="new" />
        <Btn k="open" />
        <Btn k="cabA" />
        <Btn k="cabB" />
        <Btn k="save" />
        <Btn k="note" />
        <Btn k="print" />
        <Btn k="prev" />
        <Sep />
        <Btn k="undo" />
        <Btn k="redo" />
        <Sep className="w-[7px]" />
        <Btn k="para" />
        <Btn k="ellipse" />
        <Btn k="ring" />
        <Btn k="plus" />
        <Btn k="win" />
        <Sep />
        <Btn k="list" active />
        <Btn k="grid" active />
        <Sep className="w-[7px]" />
        <Btn k="lc" />
        <Combo className="w-[215px] ml-[2px]" />
        <Tri dir="l" pale className="ml-[5px]" />
        <Tri dir="r" />
        <Btn k="eyeLoad" className="ml-[2px]" />
        <Btn k="xxOff" />
        <Btn k="eye" active />
        <Btn k="xx" active />
        <Sep className="w-[7px]" />
        <Btn k="link" />
        <Btn k="abacA" />
        <Btn k="abacB" />
      </Seg>
      <Seg className="w-[410px] ml-[2px] pl-[2px] pt-px">
        <Grip className="mr-[1px] ml-[1px]" />
        <Btn k="hand" />
        <Btn k="target" />
        <Btn k="cubeA" active />
        <Btn k="cubeB" />
        <Btn k="cubeC" />
        <Btn k="bldg" />
        <Btn k="branch" />
        <Sep className="w-[7px]" />
        <Btn k="chain" />
        <Btn k="orbit" />
        <Btn k="mirror" />
        <Btn k="cross" />
        <Btn k="info" />
        <Btn k="gearBox" />
        <Btn k="gears" />
      </Seg>
      <Seg className="w-[122px] ml-[2px] pl-[2px] pt-px">
        <Grip className="mr-[3px]" />
        <Btn k="blueDn" />
        <Btn k="blueUp" />
        <Btn k="redDn" />
        <Btn k="redUp" />
      </Seg>
    </div>
  );
}

function ToolRowTwo() {
  return (
    <div className="h-[32px] flex shrink-0 bg-[#cfd3dc]">
      <Seg className="w-[781px] pl-[3px] pt-[2px]">
        <Grip />
        <Btn k="sNode" />
        <Dd className="w-[17px]" />
        <Btn k="sLine" />
        <Btn k="sRib" className="ml-[3px]" />
        <Dd />
        <Btn k="sPoly" />
        <Dd className="w-[13px]" />
        <Sep className="w-[6px]" />
        <Btn k="sSup" />
        <Btn k="sSup2" className="ml-px" />
        <Btn k="sTile" />
        <Sep />
        <Btn k="sDim" className="ml-[3px]" />
        <Dd />
        <Btn k="sXx" />
        <Btn k="sDash" />
        <Sep className="w-[6px]" />
        <Btn k="sSurf" className="ml-[4px]" />
        <Dd />
        <Btn k="sOpen" className="ml-px" />
        <Dd />
        <Btn k="sPlate" />
        <Dd />
        <Btn k="sBox" className="ml-[2px]" />
        <Btn k="sStack" />
        <Dd />
        <Sep className="w-[5px]" />
        <Btn k="sFlow" className="ml-[3px]" />
        <Dd className="w-[12px]" />
        <Btn k="sArrow" />
        <Btn k="sFrameA" className="ml-[2px]" />
        <Btn k="sFrameB" />
        <Btn k="sBlue" />
        <Btn k="sDrop" className="ml-[2px]" />
        <Dd />
      </Seg>
      <Seg className="w-[379px] ml-[2px] pl-[2px] pt-[2px]">
        <Grip className="mr-[3px]" />
        <Btn k="eagle" />
        <Btn k="magPlus" />
        <Btn k="magX" />
        <Btn k="wire" />
        <Btn k="wire2" />
        <Sep className="w-[6px]" />
        <Btn k="vX" />
        <Btn k="vY" />
        <Btn k="vZ" className="ml-px" />
        <Btn k="vMx" className="ml-[3px]" />
        <Dd className="w-[15px]" />
        <Btn k="micro" />
        <Dd />
        <Sep className="w-[6px]" />
        <Btn k="cubeRed" className="ml-[5px]" />
        <Dd className="w-[12px]" />
      </Seg>
      <Seg className="w-[435px] ml-[2px] pl-[2px] pt-[2px]">
        <Grip className="mr-px" />
        <Btn k="portal" />
        <Btn k="pill" className="ml-px" />
        <Sep className="w-[6px]" />
        <Btn k="beam" active className="ml-[2px]" />
        <Btn k="tile" />
        <Btn k="cubeMap" />
        <Btn k="green" />
        <Btn k="blur" />
        <Btn k="note2" className="ml-px" />
        <Dd />
        <Btn k="wave" className="ml-[-1px]" />
        <Btn k="tblA" />
        <Sep className="w-[6px]" />
        <Btn k="legend" active className="ml-[3px]" />
        <Btn k="wand" />
        <Dd />
        <Btn k="rainbowV" className="ml-[3px]" />
        <Dd />
      </Seg>
    </div>
  );
}

/* ---------- navigator tree ---------- */
type Mark = "c" | "e" | "p" | "r" | "s";
type Row = { t: string; l: number; m: Mark; x?: "+" | "-"; load?: boolean; b?: boolean };

const rows: Row[] = [
  { t: "Intersections", l: 2, m: "c", load: true },
  { t: "Other Loads", l: 1, m: "c", x: "-", load: true },
  { t: "Imposed Nodal Deformations", l: 2, m: "c", load: true },
  { t: "Imposed Line Deformations", l: 2, m: "c", load: true },
  { t: "Imperfections", l: 2, m: "c", load: true },
  { t: "Generated Loads", l: 1, m: "c", x: "-", load: true },
  { t: "Separately", l: 2, m: "e", load: true },
  { t: "Action Category Prestress", l: 1, m: "c", load: true },
  { t: "Differentiate Negative Loads", l: 1, m: "c", load: true },
  { t: "Results", l: 0, m: "c", x: "-", b: true },
  { t: "Result Values", l: 1, m: "c", x: "+" },
  { t: "Title Info", l: 1, m: "c" },
  { t: "Max/Min Info", l: 1, m: "c" },
  { t: "Deformation", l: 1, m: "p", x: "+" },
  { t: "Members", l: 1, m: "p", x: "-" },
  { t: "Two-Colored", l: 2, m: "r" },
  { t: "With Diagram", l: 2, m: "r" },
  { t: "Without Diagram", l: 2, m: "r" },
  { t: "Cross-Sections", l: 2, m: "s" },
  { t: "Result Diagrams Filled", l: 2, m: "e" },
  { t: "Hatching", l: 2, m: "c" },
  { t: "All Values", l: 2, m: "e" },
  { t: "Extreme Values", l: 2, m: "e" },
  { t: "Display Hidden Result Diagram", l: 2, m: "e" },
  { t: "Reverse Results V-y and V-z", l: 2, m: "e" },
  { t: "Results on Couplings", l: 2, m: "e" },
  { t: "Draw in XY-Plane", l: 2, m: "e" },
  { t: "Stresses", l: 2, m: "p", x: "+" },
  { t: "Surfaces", l: 1, m: "p", x: "+" },
  { t: "Solids", l: 1, m: "p", x: "+" },
  { t: "Type of Display", l: 1, m: "p", x: "+" },
  { t: "Ribs - Effective Contribution on Surface/Member", l: 1, m: "c", x: "+" },
  { t: "Result Beams", l: 1, m: "c" },
  { t: "Results Within Column Area", l: 1, m: "e" },
  { t: "Support Reactions", l: 1, m: "p", x: "+" },
  { t: "Transparent", l: 1, m: "e" },
];

const indent = ["pl-[23px]", "pl-[42px]", "pl-[61px]"];
const guideX = ["left-[10px]", "left-[29px]", "left-[48px]"];
const tickX = ["left-[11px]", "left-[30px]", "left-[49px]"];
const expX = ["left-[5px]", "left-[24px]", "left-[43px]"];

function continues(i: number, level: number) {
  for (let j = i + 1; j < rows.length; j++) {
    if (rows[j].l < level) return false;
    if (rows[j].l === level) return true;
  }
  return true;
}

function Mk({ m }: { m: Mark }) {
  if (m === "r" || m === "s")
    return (
      <div className="w-[13px] h-[13px] rounded-full border border-[#666] bg-gradient-to-br from-[#d8d8e0] to-white flex items-center justify-center shrink-0">
        {m === "s" && <div className="w-[5px] h-[5px] rounded-full bg-[#222]" />}
      </div>
    );
  return (
    <div className="w-[13px] h-[13px] border border-[#555] bg-gradient-to-br from-[#dcdce4] to-white flex items-center justify-center shrink-0">
      {m === "c" && (
        <svg viewBox="0 0 11 11" width="11" height="11">
          <path d="M2.500 5.500l2 2.300 4-5" fill="none" stroke="#111" strokeWidth="1.700" />
        </svg>
      )}
      {m === "p" && <div className="w-[9px] h-[9px] bg-[#999]" />}
    </div>
  );
}

const LoadIco = () => (
  <svg viewBox="0 0 16 16" width="16" height="16" className="shrink-0">
    <path d="M8 1v8" stroke="#3a5cc0" strokeWidth="2.400" />
    <path d="M3 7h10l-5 6z" fill="#3a5cc0" stroke="#9db0e4" strokeWidth=".6" />
    <path d="M1 14.500h14" stroke="#7a8290" strokeWidth="1.500" />
  </svg>
);
const RainbowIco = () => (
  <svg viewBox="0 0 16 16" width="16" height="16" className="shrink-0">
    <path d="M0 0h16v16H0z" fill="#0a55d8" />
    <circle cx="16" cy="16" r="14" fill="#10c8e8" />
    <circle cx="16" cy="16" r="11" fill="#20c040" />
    <circle cx="16" cy="16" r="8" fill="#f0e020" />
    <circle cx="16" cy="16" r="5.500" fill="#f08010" />
    <circle cx="16" cy="16" r="3" fill="#d81010" />
    <path d="M.5 .5h15v15H.5z" fill="none" stroke="#9a9aa0" />
  </svg>
);

function Navigator() {
  return (
    <div className="w-[382px] shrink-0 flex flex-col">
      <div className="ml-[1px] h-[29px] mt-px pb-[3px] bg-[#b8bec9] flex items-center pl-[4px] text-[13px] text-[#555] font-['Noto_Sans'] border border-[#a5a9b2]">
        <span className="flex-1">Project Navigator - Display</span>
        <Pin size={13} className="text-[#777] mr-[9px] rotate-45" />
        <X size={15} className="text-[#777] mr-[4px]" />
      </div>
      <div className="ml-[1px] flex-1 min-h-0 flex border-x border-[#9fa3ac] bg-[#f0f0f0]">
        <div className="w-[2px] shrink-0" />
        <div className="w-[356px] shrink-0 bg-[#fdfdf6] overflow-hidden pt-[2px] font-['Noto_Sans'] text-[14px] text-[#333]">
          {rows.map((r, i) => (
            <div key={r.t} className={`relative h-[22px] flex items-center whitespace-nowrap ${indent[r.l]}`}>
              {r.l >= 1 && continues(i, 0) && <div className={`absolute top-0 bottom-0 border-l border-dotted border-[#666] ${guideX[0]}`} />}
              {r.l === 2 && continues(i, 1) && <div className={`absolute top-0 bottom-0 border-l border-dotted border-[#666] ${guideX[1]}`} />}
              {r.l > 0 && (
                <div
                  className={`absolute top-0 border-l border-dotted border-[#666] ${guideX[r.l]} ${
                    continues(i, r.l) ? "bottom-0" : "h-[11px]"
                  }`}
                />
              )}
              <div className={`absolute top-[11px] w-[11px] border-t border-dotted border-[#666] ${tickX[r.l]}`} />
              {r.x && (
                <div
                  className={`absolute top-[6px] w-[10px] h-[10px] bg-gradient-to-b from-white to-[#cdd0da] border border-[#9aa0b0] flex items-center justify-center ${expX[r.l]}`}
                >
                  <div className="w-[6px] h-px bg-[#2a3f8f]" />
                  {r.x === "+" && <div className="absolute w-px h-[6px] bg-[#2a3f8f]" />}
                </div>
              )}
              <div className="relative flex items-center">
                <Mk m={r.m} />
                <div className="w-[3px]" />
                {r.load ? <LoadIco /> : <RainbowIco />}
                <span className={`ml-[5px] ${r.b ? "font-bold text-[#111]" : ""}`}>{r.t}</span>
              </div>
            </div>
          ))}
        </div>
        <div className="w-[19px] shrink-0 bg-[#f0f0f0] flex flex-col items-center pt-[5px] pb-[5px] text-[#444]">
          <ChevronUp size={15} strokeWidth={1.8} />
          <div className="mt-[216px] h-[191px] w-full bg-[#cdcdcd]" />
          <div className="flex-1" />
          <ChevronDown size={15} strokeWidth={1.8} />
        </div>
        <div className="w-[3px] shrink-0" />
      </div>
      <div className="ml-[1px] h-[20px] flex items-center bg-[#f0f0f0] border-x border-b border-[#9fa3ac] text-[#444] shrink-0">
        <ChevronLeft size={15} strokeWidth={1.8} className="ml-[5px]" />
        <div className="ml-[3px] w-[276px] h-full bg-[#cdcdcd]" />
        <div className="flex-1" />
        <ChevronRight size={15} strokeWidth={1.8} className="mr-[24px]" />
      </div>
      <div className="h-[33px] flex items-center bg-[#cfd3dc] text-[13px] text-[#5a5f6a] font-['Noto_Sans'] shrink-0">
        <div className="w-[63px] pl-[6px] flex items-center gap-[1px]">
          <svg viewBox="0 0 16 16" width="18" height="18">
            <path d="M1 2h13v12H1z" fill="#eef0f6" stroke="#7a90c0" />
            <path d="M1 2h13v3H1z" fill="#e8a060" />
            <circle cx="8" cy="10" r="3.500" fill="#bcd6f4" stroke="#2f6fb5" />
          </svg>
          <span>Data</span>
        </div>
        <div className="w-[66px] h-[26px] bg-[#e4e8f0] border border-white rounded-b-[3px] flex items-center pl-[2px] gap-[2px]">
          <svg viewBox="0 0 16 16" width="16" height="16">
            <path d="M2 5h12v10H2z" fill="#eef2fa" stroke="#3f5fb0" />
            <path d="M2 1l10 1 2 3H2z" fill="#9a8a72" />
            <path d="M4 8h8M4 10.500h8M4 13h8" stroke="#3f5fb0" />
          </svg>
          <span>Display</span>
        </div>
        <div className="w-[71px] pl-[11px] flex items-center gap-[2px]">
          <svg viewBox="0 0 16 16" width="16" height="16">
            <path d="M1 15l11-4V1L5 7z" fill="#a8bcec" stroke="#4a62b8" />
          </svg>
          <span>Views</span>
        </div>
        <div className="flex items-center gap-[3px]">
          <svg viewBox="0 0 16 16" width="16" height="16">
            <path d="M1 8l7-5 7 5-7 5z" fill="#111" />
            <path d="M2.500 7.500l5.500-4 5.500 4-5.500 3.500z" fill="#30c060" />
            <path d="M4 7l4-2.500 3 2-4 2z" fill="#2c6fe0" />
            <path d="M8 10l4-2.500 1 .5-5 3z" fill="#e02020" />
          </svg>
          <span>Results</span>
        </div>
      </div>
    </div>
  );
}

/* ---------- 3D viewport ---------- */
type Poly = [string, string];
const BLUE = "#0000ff";
const NAVY = "#000099";
const SKY = "#00a0ff";
const RED = "#ff0000";
const ORG = "#ffaa00";
const DRK = "#bb0000";
const YEL = "#d4d400";

// polygons below are in the coordinates of the two halves of the view
const left: Poly[] = [
  [BLUE, "393,372 435,385 370,575 358,590 320,570"],
  [NAVY, "320,570 358,590 370,575 262,872 217,856"],
  [SKY, "533,238 552,224 594,233 594,532 570,550 533,540"],
  [BLUE, "533,540 570,550 594,532 594,718 567,735 533,723"],
  [BLUE, "780,100 810,90 838,115 797,280 765,293 735,265"],
  [NAVY, "735,265 765,293 797,280 730,542 695,555 680,500"],
  [RED, "643,428 668,420 703,430 683,610 660,618 624,608"],
  [ORG, "624,608 660,618 683,610 648,955 623,963 587,952"],
  [BLUE, "850,515 878,503 910,503 955,715 925,728 893,727"],
  [NAVY, "893,727 925,728 955,715 1022,1045 985,1058 962,1058"],
  [RED, "987,195 1012,172 1047,183 1065,335 1037,357 1005,348"],
  [ORG, "1005,348 1037,357 1065,335 1097,632 1075,650 1042,640"],
  [SKY, "1097,382 1122,369 1157,379 1157,680 1130,696 1097,686"],
  [BLUE, "1097,686 1130,696 1157,680 1157,865 1130,880 1097,868"],
  [BLUE, "1255,240 1273,221 1305,216 1370,415 1362,430 1320,438"],
  [NAVY, "1320,438 1362,430 1370,415 1473,715 1462,737 1424,743"],
];
const leftSeams = [
  "318,570 358,587 370,575",
  "533,540 570,550 594,532",
  "735,265 765,293 797,280",
  "624,608 660,618 683,610",
  "893,727 925,728 955,715",
  "1005,348 1037,357 1065,335",
  "1097,686 1130,696 1157,680",
  "1320,438 1362,430 1370,415",
];
const leftNodes = [
  [410, 388], [562, 235], [808, 107], [674, 430], [880, 509], [1015, 189], [1126, 381], [1279, 229], [468, 697], [844, 794], [1220, 892],
];

const right: Poly[] = [
  [DRK, "181,900 205,886 241,896 241,1130 215,1150 181,1145"],
  [DRK, "408,742 432,726 469,737 469,980 440,995 408,985"],
  [BLUE, "730,490 760,478 790,503 758,620 727,633 698,605"],
  [NAVY, "698,605 727,633 758,620 665,940 640,948 625,900"],
  [ORG, "805,732 830,718 866,730 866,900 830,960 805,980"],
  [ORG, "578,895 605,880 638,900 638,1105 618,1120 578,1090"],
  [YEL, "618,1120 638,1108 638,1125 620,1145"],
  [BLUE, "345,760 385,775 335,910 330,920 290,905"],
  [NAVY, "290,905 330,920 335,910 215,1262 195,1265 165,1248"],
  [ORG, "349,1055 375,1040 408,1050 408,1290 383,1308 349,1297"],
  [SKY, "483,628 510,613 544,623 544,935 517,950 483,940"],
  [BLUE, "483,940 517,950 544,935 544,1108 515,1124 483,1113"],
  [RED, "937,588 960,561 997,572 1025,790 998,815 965,805"],
  [ORG, "965,805 998,815 1025,790 1047,1020 1015,1040 985,1030"],
  [BLUE, "1205,625 1225,610 1255,605 1302,745 1295,760 1250,768"],
  [NAVY, "1250,768 1295,760 1302,745 1425,1110 1410,1130 1350,1060"],
  [DRK, "1348,982 1375,968 1409,980 1409,1220 1385,1237 1348,1228"],
  [SKY, "1047,772 1072,758 1107,768 1107,1080 1080,1097 1047,1087"],
  [BLUE, "1047,1087 1080,1097 1107,1080 1107,1252 1085,1268 1047,1258"],
  [ORG, "953,995 977,978 1014,990 1014,1205 985,1222 953,1210"],
  [YEL, "953,1210 985,1222 1014,1205 1014,1228 985,1245 953,1235"],
  [RED, "594,817 620,810 654,820 628,1078 598,1087 566,1078"],
  [ORG, "566,1078 598,1087 628,1078 598,1345 570,1352 537,1345"],
  [ORG, "725,1150 752,1137 785,1148 785,1390 760,1405 725,1395"],
  [BLUE, "800,903 830,892 862,892 892,1040 860,1055 830,1050"],
  [NAVY, "830,1050 860,1055 892,1040 972,1438 935,1450 910,1445"],
  [ORG, "1180,830 1205,817 1242,827 1242,1068 1215,1085 1180,1075"],
  [DRK, "1120,1145 1147,1130 1181,1140 1181,1380 1155,1397 1120,1388"],
];
const rightSeams = [
  "290,905 330,920 340,905",
  "483,940 517,950 544,935",
  "698,605 727,633 758,620",
  "965,805 998,815 1025,790",
  "1250,768 1295,760 1302,745",
  "1047,1087 1080,1097 1107,1080",
  "953,1210 985,1222 1014,1205",
  "566,1078 598,1087 628,1078",
  "830,1050 860,1055 892,1040",
];
const rightNodes = [
  [210, 899], [361, 776], [438, 738], [379, 1052], [513, 624], [759, 496], [623, 818], [754, 1150], [834, 732], [829, 899], [966, 577], [982, 989], [1077, 771], [1210, 828], [1229, 618], [1379, 981], [1150, 1141],
];
const springs = [
  [190, 1272],
  [570, 1368],
  [665, 950],
  [945, 1468],
  [1030, 1050],
  [1422, 1135],
];

const O = { x: 415.4, y: 531 };
function dotPath() {
  let d = "";
  for (let i = -40; i < 60; i++) {
    for (let j = -30; j < 60; j++) {
      const x = O.x + i * 32 + j * 19.6;
      const y = O.y + i * 8.3 - j * 14.1;
      if (x > 388 && x < 1445 && y > 134 && y < 672) d += `M${x.toFixed(1)} ${y.toFixed(1)}h1v1h-1z`;
    }
  }
  return d;
}

const lineAlongX = (off: number) => `M388 ${O.y - off + (388 - O.x) * 0.2616}L1445 ${O.y - off + (1445 - O.x) * 0.2616}`;
const lineAlongY = (off: number, top = 133, bot = 673) =>
  `M${O.x + (O.y + off - top) / 0.717} ${top}L${O.x + (O.y + off - bot) / 0.717} ${bot}`;

function Axes({ x, y, w, g }: { x: number; y: number; w: number; g: number }) {
  return (
    <g>
      <path d={`M${x} ${y}l${w} ${w * 0.25}`} stroke="#e00000" strokeWidth="1.4" />
      <path d={`M${x + w - 9} ${y + w * 0.25 - 5}l10 5-11 0z`} fill="#b00000" />
      <path d={`M${x} ${y}l${-g} ${g * 0.72}`} stroke="#20e020" strokeWidth="1.4" />
      <path d={`M${x - g + 1} ${y + g * 0.72 + 2}l3-7 5 5z`} fill="#109010" />
      <path d={`M${x} ${y}v36`} stroke="#0000e0" strokeWidth="1.4" />
      <path d={`M${x - 2.500} ${y + 28}h5l-2.500 10z`} fill="#0000a0" />
    </g>
  );
}

function Viewport() {
  return (
    <div className="relative w-[1057px] h-[538px] shrink-0 bg-[#fefefe] border-t-2 border-l-2 border-[#a0a4ae] overflow-hidden">
      <svg viewBox="389 135 1055 536" width="1055" height="536" className="block">
        <path d={lineAlongX(189)} stroke="#cfcfcf" />
        <path d={lineAlongX(378)} stroke="#cfcfcf" />
        <path d={lineAlongX(567)} stroke="#cfcfcf" />
        <path d={lineAlongY(-310)} stroke="#cfcfcf" />
        <path d={lineAlongY(311, 198)} stroke="#cfcfcf" />
        <path d={lineAlongY(622, 423)} stroke="#cfcfcf" />
        <path d={lineAlongX(0)} stroke="#2b9c96" />
        <path d={lineAlongY(0, 133, O.y)} stroke="#2b9c96" />
        <path d={dotPath()} fill="#111" />
        <g transform="translate(385 130) scale(.338 .3444)">
          {left.map(([c, p]) => (
            <polygon key={p} points={p} fill={c} />
          ))}
          {leftSeams.map((p) => (
            <polyline key={p} points={p} fill="none" stroke="#a01010" vectorEffect="non-scaling-stroke" />
          ))}
          {leftNodes.map(([x, y]) => (
            <rect key={x} x={x - 6} y={y - 6} width="12" height="12" fill="#800000" />
          ))}
        </g>
        <g transform="translate(910 130) scale(.338 .3444)">
          {springs.map(([x, y]) => (
            <path
              key={x}
              transform={`translate(${x} ${y})`}
              d="M-35-8l20 8 8 26M-22 2l-4 28M-14 8l10 8-5 14M-10-18l10 22 24-12M0 4l22 24 8-36M30-14l-6 30M16 6l-6 22M-30 10l15-6M-2 8l3 22M26 4l12-8"
              fill="none"
              stroke="#10f010"
              vectorEffect="non-scaling-stroke"
            />
          ))}
          {right.map(([c, p]) => (
            <polygon key={p} points={p} fill={c} />
          ))}
          {rightSeams.map((p) => (
            <polyline key={p} points={p} fill="none" stroke="#a01010" vectorEffect="non-scaling-stroke" />
          ))}
          {rightNodes.map(([x, y]) => (
            <rect key={x} x={x - 6} y={y - 6} width="12" height="12" fill="#800000" />
          ))}
        </g>
        <Axes x={415.4} y={531} w={34} g={23} />
        <Axes x={443} y={576} w={34} g={21} />
      </svg>
      <div className="absolute left-[3px] top-[4px] text-[11px] leading-[14px] text-[#222]">
        Visibility mode
        <br />
        Internal Forces N [kN]
        <br />
        LC1
      </div>
      <div className="absolute left-[3px] bottom-[6px] text-[11px] leading-[14px] text-[#222]">Max N: -37.94, Min N: -198.26 kN</div>
      <span className="absolute left-[69px] top-[401px] text-[10px] text-[#e00000]">X</span>
      <span className="absolute left-[23px] top-[435px] text-[10px] text-[#0000e0]">Z</span>
      <span className="absolute left-[95px] top-[447px] text-[10px] text-[#e00000]">X</span>
      <span className="absolute left-[26px] top-[455px] text-[10px] text-[#20d020]">Y</span>
      <span className="absolute left-[51px] top-[480px] text-[10px] text-[#0000e0]">Z</span>
    </div>
  );
}

/* ---------- legend panel ---------- */
const legend: [string, string][] = [
  ["-37.94", "bg-[#bb0000]"],
  ["-52.51", "bg-[#ff0000]"],
  ["-67.09", "bg-[#ffaa00]"],
  ["-81.66", "bg-[#d4d000]"],
  ["-96.24", "bg-[#ffff00]"],
  ["-110.81", "bg-[#00ff00]"],
  ["-125.39", "bg-[#00e67a]"],
  ["-139.96", "bg-[#00ffff]"],
  ["-154.54", "bg-[#00a0ff]"],
  ["-169.11", "bg-[#0000ff]"],
  ["-183.69", "bg-[#000099] border-b"],
  ["-198.26", ""],
];

function Panel() {
  return (
    <div className="flex-1 ml-[5px] mr-px flex flex-col">
      <div className="h-[29px] pb-[3px] bg-[#b8bec9] flex items-center pl-[4px] text-[13px] text-[#555] font-['Noto_Sans'] border border-[#a5a9b2]">
        <span className="flex-1">Panel</span>
        <Pin size={13} className="text-[#777] mr-[9px] rotate-45" />
        <X size={15} className="text-[#777] mr-[4px]" />
      </div>
      <div className="h-[480px] bg-[#f0f0f3] border-x border-b border-[#a5a9b2] px-[7px] pt-[4px] text-[12.5px] text-[#222]">
        <div className="h-[20px] flex items-center text-[13px]">Internal Forces</div>
        <div className="h-[20px] flex items-center text-[13px]">N [kN]</div>
        <div className="mt-[2px] w-[169px] h-[263px] bg-[#f8f6f0] border-l border-t border-[#999] border-r border-b border-r-white border-b-white pt-[10px] flex flex-col">
          {legend.map(([v, c]) => (
            <div key={v} className="h-[22px] shrink-0 flex items-start relative">
              {c && <div className={`ml-[44px] w-[27px] h-full border-x border-t border-black ${c}`} />}
              <div className="absolute left-[71px] top-0 w-[6px] h-px bg-black" />
              <span className="absolute right-[43px] top-[-8px] leading-[16px] text-[13px]">{v}</span>
            </div>
          ))}
        </div>
        <div className="mt-[13px] w-[169px] h-[43px] bg-[#eff2fa] border border-[#dfe2f0] border-r-[#b0b4e8] border-b-[#b0b4e8] flex flex-col justify-center text-[13px] pl-[54px] leading-[20px]">
          <div className="flex w-[85px]">
            <span className="w-[32px]">Max</span>
            <span>:</span>
            <span className="flex-1 text-right">-37.94</span>
          </div>
          <div className="flex w-[85px]">
            <span className="w-[32px]">Min</span>
            <span>:</span>
            <span className="flex-1 text-right">-198.26</span>
          </div>
        </div>
      </div>
      <div className="flex-1 flex items-center gap-[7px] pl-[5px]">
        <div className="w-[23px] h-[26px] bg-[#e6eaf2] border border-white rounded-b-[3px] flex items-center justify-center">
          <svg viewBox="0 0 16 16" width="16" height="16">
            <path d="M1 1h8v3H1z" fill="#e01010" />
            <path d="M1 4h8v3H1z" fill="#f0a010" />
            <path d="M1 7h8v3H1z" fill="#20d040" />
            <path d="M1 10h8v2H1z" fill="#10d0e0" />
            <path d="M1 12h8v3H1z" fill="#1020e0" />
            <path d="M11 3h3v2h-3zM11 7h3v2h-3zM11 11h3v2h-3z" fill="#888" />
          </svg>
        </div>
        <svg viewBox="0 0 20 18" width="20" height="18">
          <path d="M10 1v15M4 16h12M2 4h16" stroke="#555" strokeWidth="1.400" />
          <path d="M0 10h7L3.500 4zM13 10h7l-3.500-6z" fill="#d8b850" stroke="#555" strokeWidth=".7" />
        </svg>
        <div className="w-[5px]" />
        <svg viewBox="0 0 18 18" width="18" height="18">
          <path d="M1 16h16v2H1z" fill="#222" />
          <path d="M5 15c6-1 8-5 6-10L8 1 5 4l4 6-3 3" fill="#777" stroke="#222" />
        </svg>
      </div>
    </div>
  );
}

/* ---------- results table ---------- */
const table: [string, string, string, string, boolean][] = [
  ["Sum of loads in X", "0.00", "kN", "", true],
  ["Sum of support forces in X", "0.00", "kN", "", true],
  ["Sum of loads in Y", "0.00", "kN", "", false],
  ["Sum of support forces in Y", "0.00", "kN", "", false],
  ["Sum of loads in Z", "6120.11", "kN", "", true],
  ["Sum of support forces in Z", "6120.11", "kN", "Deviation:  0.00 %", true],
  ["Resultant of reactions about X", "0.010", "kNm", "At center of gravity of model (X: 12.934, Y: -5.000, Z: -4.567 m)", false],
  ["Resultant of reactions about Y", "-201.692", "kNm", "At center of gravity of model", false],
];

const tabs: [string, string][] = [
  ["Nodes - Support Forces", "w-[155px]"],
  ["Nodes - Deformations", "w-[140px]"],
  ["Members - Local Deformations", "w-[193px]"],
  ["Members - Global Deformations", "w-[200px]"],
  ["Members - Internal Forces", "w-[166px]"],
  ["Members - Strains", "w-[117px] rounded-br-[3px]"],
];

function Results() {
  return (
    <div className="mt-[6px] flex-1 min-h-0 flex flex-col">
      <div className="h-[28px] pb-[3px] bg-[#b8bec9] flex items-center pl-[2px] mr-px text-[13px] text-[#555] font-['Noto_Sans'] border border-[#a5a9b2] shrink-0">
        <span className="flex-1">4.0 Results - Summary</span>
        <Pin size={13} className="text-[#777] mr-[9px] rotate-45" />
        <X size={15} className="text-[#777] mr-[4px]" />
      </div>
      <div className="h-[31px] flex items-center pl-[8px] bg-gradient-to-b from-[#edf1fa] to-[#cfd4de] shrink-0">
        <Btn k="rGreen" />
        <Btn k="rAdd" />
        <Btn k="rDown" />
        <Btn k="rTbl" active />
        <Btn k="rWave" />
        <Sep />
        <Btn k="rLeft" />
        <Btn k="rRight" />
        <Sep />
        <Btn k="rCurveA" active className="ml-px" />
        <Btn k="rCurveB" active />
        <Sep />
        <Btn k="rGrid" />
        <Btn k="rPen" />
        <Sep className="w-[6px]" />
        <Combo className="w-[196px] ml-[4px]" />
        <Sep className="w-[9px] ml-[1px]" />
        <Tri dir="l" className="ml-[1px]" />
        <Tri dir="r" />
        <Sep className="w-[8px] ml-[2px]" />
        <Btn k="funnel" className="ml-[1px]" />
        <Sep className="w-[6px]" />
        <Btn k="iBeamInfo" className="ml-px" />
        <Sep />
        <Btn k="tree" active className="ml-px grayscale-[.4]" />
        <Sep />
        <Btn k="excel" />
        <Sep />
        <Btn k="calc" />
      </div>
      <div className="h-[224px] border-t border-[#777] bg-[#f0f0f0] pl-[2px] pt-px flex shrink-0 text-[13px] text-[#111]">
        <div className="flex-1 min-w-0">
          <div className="flex h-[38px]">
            <div className="w-[53px] bg-[#ebebeb] border-b border-[#888] shrink-0" />
            <div className="flex-1">
              <div className="flex h-[18px] leading-[17px] text-center">
                <div className="w-[345px] bg-[#0078d7] border-r border-[#eee] border-b-2 border-b-[#666]">A</div>
                <div className="w-[86px] bg-[#e2e2e2] border-r border-[#888] border-b-2 border-b-[#666]">B</div>
                <div className="w-[57px] bg-[#e2e2e2] border-r border-[#888] border-b-2 border-b-[#666]">C</div>
                <div className="w-[475px] bg-[#e2e2e2] border-r border-[#888] border-b-2 border-b-[#666]">D</div>
                <div className="flex-1 bg-[#ececec] border-b border-[#aaa]" />
              </div>
              <div className="flex h-[20px] leading-[19px] text-center border-b border-[#888]">
                <div className="w-[345px] bg-[#f0f0f0] border-r border-[#aaa]">Description</div>
                <div className="w-[86px] bg-[#f0f0f0] border-r border-[#aaa]">Value</div>
                <div className="w-[57px] bg-[#f0f0f0] border-r border-[#aaa]">Unit</div>
                <div className="w-[475px] bg-[#f0f0f0] border-r border-[#aaa]">Comment</div>
                <div className="flex-1 bg-[#eeeeee]" />
              </div>
            </div>
          </div>
          <div className="flex h-[19px] border-b border-[#999]">
            <div className="w-[53px] shrink-0 bg-[#0078d7] border-r border-[#555]" />
            <div className="w-[963px] bg-white border border-dotted border-black flex items-center pl-[2px] pt-px font-bold text-[14px]">
              <div className="w-[11px] h-[11px] border border-[#333] flex items-center justify-center mr-[3px]">
                <div className="w-[7px] h-px bg-[#222]" />
              </div>
              LC1
            </div>
            <div className="flex-1 bg-[#eeeeee]" />
          </div>
          {table.map(([d, v, u, c, tint]) => (
            <div key={d} className="flex h-[19px] border-b border-[#999] leading-[20px]">
              <div className="w-[53px] shrink-0 bg-[#e0e0e0] border-r-2 border-b border-r-[#666] border-b-[#666] border-t border-t-white border-l border-l-white" />
              <div className={`w-[345px] relative pl-[28px] border-r border-[#aaa] whitespace-nowrap ${tint ? "bg-[#f5f7fd]" : "bg-white"}`}>
                <div className="absolute left-[8px] top-[9px] w-[11px] h-px bg-[#bbb]" />
                <div className="absolute left-[8px] top-0 bottom-0 w-px bg-[#ddd]" />
                {d}
              </div>
              <div className={`w-[86px] text-right pr-[4px] border-r border-[#aaa] ${tint ? "bg-[#f5f7fd]" : "bg-white"}`}>{v}</div>
              <div className={`w-[57px] pl-[4px] border-r border-[#aaa] ${tint ? "bg-[#f5f7fd]" : "bg-white"}`}>{u}</div>
              <div className={`w-[475px] pl-[4px] border-r border-[#aaa] whitespace-pre ${tint ? "bg-[#f5f7fd]" : "bg-white"}`}>{c}</div>
              <div className="flex-1 bg-[#eeeeee]" />
            </div>
          ))}
        </div>
        <div className="w-[21px] shrink-0 mr-[4px] flex flex-col items-center text-[#444] pt-[4px] h-[211px] bg-[#f0f0f0]">
          <ChevronUp size={15} strokeWidth={1.8} />
          <div className="mt-[2px] h-[37px] w-full bg-[#cdcdcd]" />
          <div className="flex-1" />
          <ChevronDown size={15} strokeWidth={1.8} />
        </div>
      </div>
      <div className="flex h-[21px] border-t border-[#666] bg-[#f0f0f0] text-[13.3px] text-[#111] shrink-0">
        <div className="w-[120px] h-[19px] pl-[4px] leading-[20px] bg-[#f0f0f0] border-b border-[#666] -mt-px">Results - Summary</div>
        {tabs.map(([t, w]) => (
          <div key={t} className={`h-[19px] pl-[3px] leading-[22px] whitespace-nowrap bg-[#f3f3f3] border-l border-b border-[#666] ${w}`}>
            {t}
          </div>
        ))}
        <div className="w-px h-[19px] bg-[#666]" />
        <div className="flex-1" />
        <div className="flex h-[19px] mr-px border-t border-b border-white">
          {["M14 2L7 7l7 5zM5 2v10", "M12 2L6 7l6 5z", "M6 2l6 5-6 5z", "M6 2l6 5-6 5zM14 2v10"].map((d, i) => (
            <div key={d} className="w-[18px] bg-[#eeeeee] border-l border-[#bbb] flex items-center justify-center">
              <svg viewBox="0 0 18 14" width="14" height="12">
                <path d={d} fill={i < 2 ? "#aaa" : "#111"} stroke={i < 2 ? "#aaa" : "#111"} />
              </svg>
            </div>
          ))}
        </div>
      </div>
      <div className="flex-1 bg-[#f0f0f0]" />
    </div>
  );
}

/* ---------- status bar ---------- */
const snaps: [string, string][] = [
  ["SNAP", "w-[42px]"],
  ["GRID", "w-[40px] ml-[2px]"],
  ["CARTES", "w-[62px] ml-[3px]"],
  ["OSNAP", "w-[54px] ml-[2px]"],
  ["GLINES", "w-[54px] ml-[2px]"],
  ["DXF", "w-[33px] ml-[2px]"],
];

function StatusBar() {
  return (
    <div className="h-[27px] shrink-0 flex items-stretch bg-gradient-to-b from-[#d8dadf] via-[#a9adb5] to-[#b8bbc3] border-t border-[#e8e8ea] border-b border-b-[#333] text-[14px] text-[#333]">
      <div className="w-[839px] shrink-0" />
      {snaps.map(([s, w]) => (
        <div key={s} className={`shrink-0 h-[25px] border-l-2 border-t border-b border-r border-[#222] border-r-[#ccc] flex items-center justify-center font-['Noto_Sans'] text-[13.5px] ${w}`}>
          {s}
        </div>
      ))}
      <div className="w-[190px] pl-[3px] pt-[3px] border-r border-[#9a9da6] font-['Noto_Sans'] text-[13px] whitespace-nowrap">Visibility Mode</div>
      <div className="w-[88px] border-r border-[#9a9da6]" />
      <div className="w-[75px] border-r border-[#9a9da6]" />
      <div className="w-[74px] border-r border-[#9a9da6]" />
    </div>
  );
}

export default function App() {
  return (
    <div className="w-[1656px] h-[1030px] flex flex-col overflow-hidden bg-[#cfd3dc] font-['Liberation_Sans',sans-serif]">
      <TitleBar />
      <MenuBar />
      <ToolRowOne />
      <ToolRowTwo />
      <div className="flex-1 min-h-0 flex">
        <Navigator />
        <div className="w-[5px] shrink-0" />
        <div className="flex-1 min-w-0 flex flex-col pt-px">
          <div className="flex h-[538px] shrink-0">
            <Viewport />
            <Panel />
          </div>
          <Results />
        </div>
      </div>
      <StatusBar />
    </div>
  );
}
